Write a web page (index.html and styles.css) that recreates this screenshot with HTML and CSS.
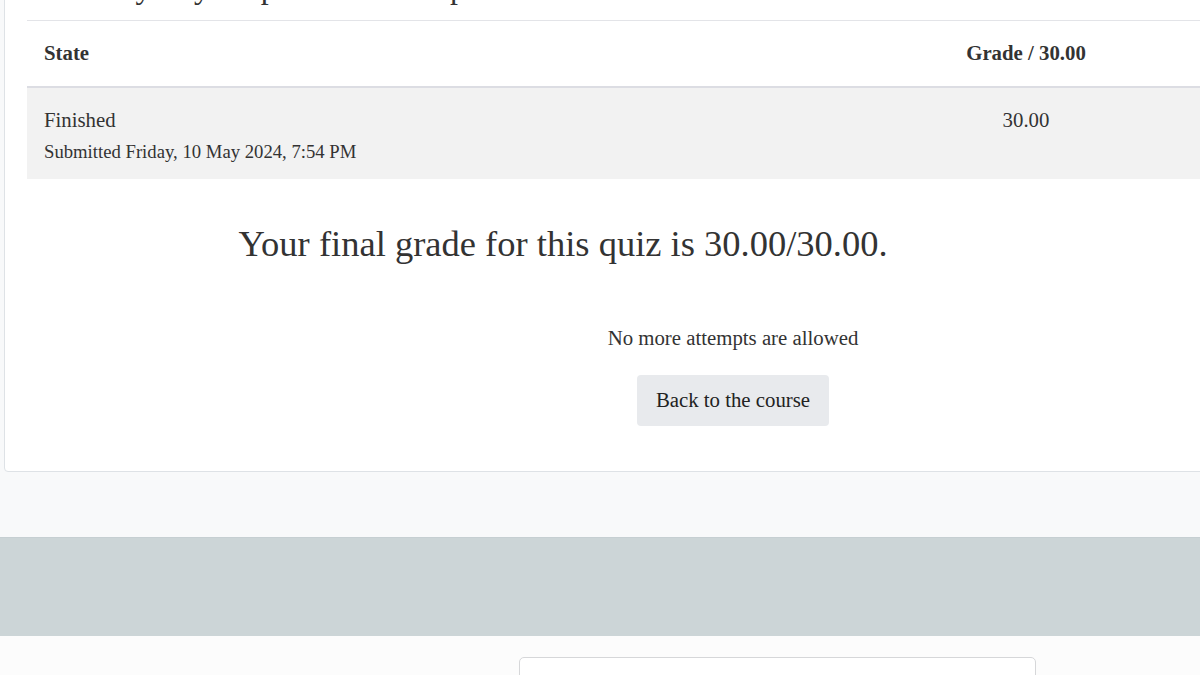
FILE: index.html
```html
<!doctype html>
<html lang="en">
<head>
    <meta charset="UTF-8">
    <meta name="viewport" content="width=device-width, initial-scale=1.0">
    <title>Quiz summary</title>
    <link rel="stylesheet" href="styles.css">
</head>
<body>
<div class="page">
    <div class="card">
        <h2 class="summary_title">Summary of your previous attempts</h2>

        <table class="attempts">
            <thead>
            <tr>
                <th>State</th>
                <th class="grade">Grade / 30.00</th>
                <th class="review"></th>
            </tr>
            </thead>
            <tbody>
            <tr>
                <td>Finished<br><span class="submitted">Submitted Friday, 10 May 2024, 7:54 PM</span></td>
                <td class="grade">30.00</td>
                <td class="review"></td>
            </tr>
            </tbody>
        </table>

        <h3 class="final_grade">Your final grade for this quiz is 30.00/30.00.</h3>

        <div class="attempt_box">
            <p class="no_attempts">No more attempts are allowed</p>
            <a class="btn" href="#">Back to the course</a>
        </div>
    </div>
</div>

<footer class="footer"></footer>

<div class="below">
    <div class="below_box"></div>
</div>
</body>
</html>
```

FILE: styles.css
```css
body {
    margin: 0;
    background-color: #f8f9fa;
    font-family: "Liberation Serif", "Times New Roman", serif;
    font-size: 20.8px;
    line-height: 1.48;
    color: #333;
    overflow: hidden;
}

.page {
    padding-bottom: 65px;
}

.card {
    margin: -63px -10px 0 4px;
    padding: 30px 0 45px 22px;
    background-color: #fff;
    border: 1px solid #dee2e6;
    border-radius: 4px;
}

.summary_title {
    margin: 0 0 14px;
    font-size: 32px;
    font-weight: normal;
    line-height: 1.2;
}

.attempts {
    width: 100%;
    border-collapse: collapse;
}

.attempts th {
    padding: 17px;
    text-align: left;
    font-weight: bold;
    border-top: 1px solid #e3e4e8;
    border-bottom: 2px solid #dcdde3;
}

.attempts td {
    padding: 17px 17px 12px;
    background-color: #f2f2f2;
    vertical-align: top;
}

.attempts .grade {
    width: 138px;
    text-align: center;
}

.attempts .review {
    width: 63px;
}

.submitted {
    font-size: 18.7px;
}

.final_grade {
    margin: 43px 0 0;
    padding-right: 110px;
    font-size: 36.5px;
    font-weight: normal;
    line-height: 1.2;
    text-align: center;
}

.attempt_box {
    display: flex;
    flex-direction: column;
    align-items: center;
    padding-left: 230px;
}

.no_attempts {
    margin: 58px 0 21px;
}

.btn {
    display: block;
    padding: 10px 19px;
    background-color: #e8eaed;
    border-radius: 4px;
    color: #222;
    text-decoration: none;
}

.footer {
    height: 98px;
    background-color: #ccd5d7;
    border-top: 1px solid #c6cfd2;
}

.below {
    display: flex;
    padding: 21px 0 0 519px;
    background-color: #fcfcfc;
    height: 60px;
}

.below_box {
    width: 515px;
    height: 60px;
    background-color: #fff;
    border: 1px solid #d6d7d9;
    border-radius: 5px;
}
```
